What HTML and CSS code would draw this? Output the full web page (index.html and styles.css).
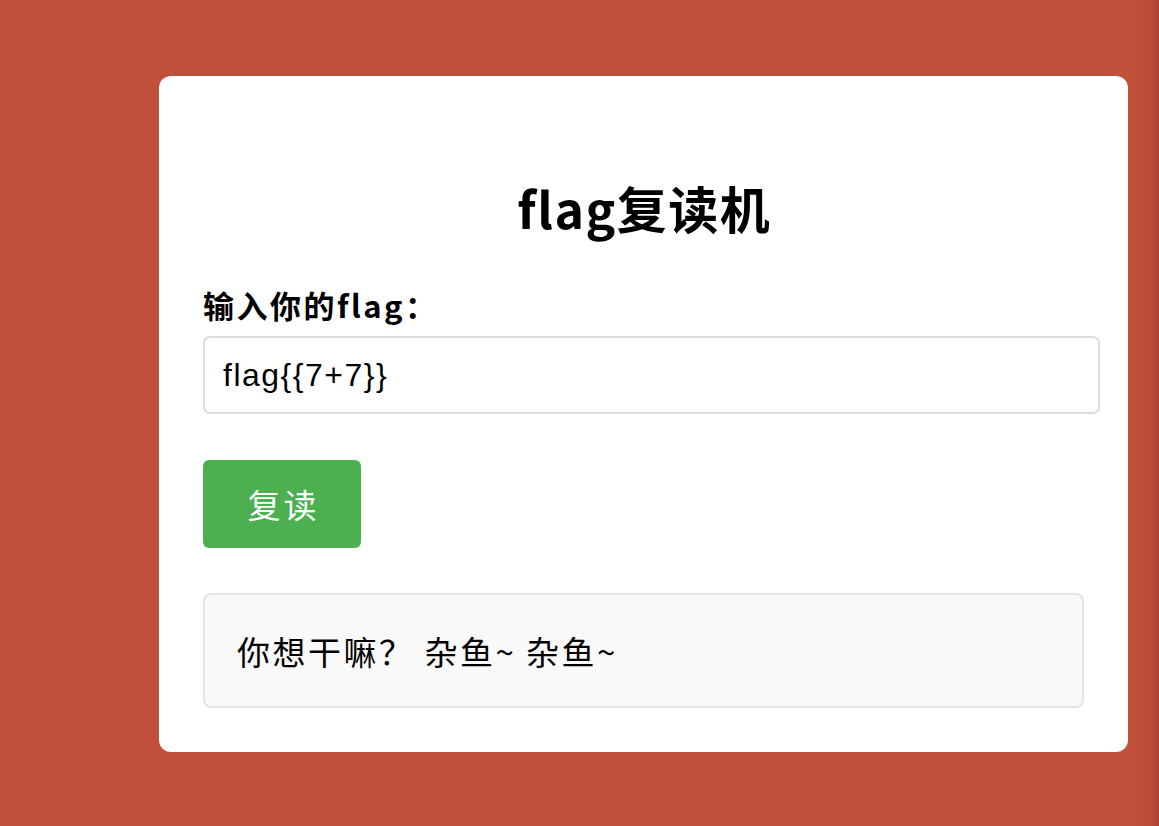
FILE: index.html
```html
<!DOCTYPE html>
<html lang="zh-CN">
<head>
<meta charset="utf-8">
<title>flag复读机</title>
<link rel="stylesheet" href="styles.css">
</head>
<body>
<div class="page">
  <div class="card">
    <h1 class="title">flag复读机</h1>
    <form class="form">
      <label class="label" for="flag">输入你的flag：</label>
      <input class="input" id="flag" type="text" value="flag{{7+7}}">
      <button class="btn" type="button">复读</button>
    </form>
    <div class="result">你想干嘛？ 杂鱼~ 杂鱼~</div>
  </div>
</div>
</body>
</html>
```

FILE: styles.css
```css
html, body {
  margin: 0;
  padding: 0;
}
body {
  background: #c0503a;
  font-family: "Noto Sans CJK SC", "Noto Sans", sans-serif;
  color: #000;
  min-height: 826px;
}
.page {
  display: flex;
  min-height: 826px;
  padding: 76px 0 0 159px;
  box-sizing: border-box;
  background: linear-gradient(to right, #c0503a 0, #c0503a 1130px, #bb4c37 1150px, #b04634 1157px, #a8412f 1159px);
}
.card {
  width: 969px;
  height: 676px;
  box-sizing: border-box;
  background: #fff;
  border-radius: 12px;
  padding: 100px 44px 44px 44px;
}
.title {
  margin: 0;
  font-size: 50px;
  line-height: 62px;
  font-weight: 700;
  letter-spacing: 1.5px;
  text-indent: 1.5px;
  text-align: center;
}
.form {
  display: flex;
  flex-direction: column;
  align-items: flex-start;
  margin: 0;
}
.label {
  margin-top: 47px;
  font-size: 31px;
  line-height: 40px;
  font-weight: 700;
  letter-spacing: 2.5px;
}
.input {
  margin-top: 11px;
  width: 897px;
  height: 78px;
  box-sizing: border-box;
  border: 2px solid #dcdcdc;
  border-radius: 7px;
  padding: 0 18px;
  font-family: "Liberation Sans", Arial, sans-serif;
  font-size: 32px;
  letter-spacing: 1.5px;
  color: #000;
  background: #fff;
  outline: none;
}
.btn {
  margin-top: 46px;
  width: 158px;
  height: 88px;
  border: none;
  border-radius: 6px;
  background: #4caf50;
  color: #fff;
  font-family: "Noto Sans CJK SC", sans-serif;
  font-size: 33px;
  letter-spacing: 3px;
  padding: 0 0 0 3px;
}
.result {
  margin-top: 45px;
  width: 881px;
  height: 115px;
  box-sizing: border-box;
  background: #f9f9f9;
  border: 2px solid #e4e4e4;
  border-radius: 8px;
  padding: 0 32px;
  display: flex;
  align-items: center;
  font-size: 33px;
  letter-spacing: 2.5px;
  white-space: pre;
}
```
